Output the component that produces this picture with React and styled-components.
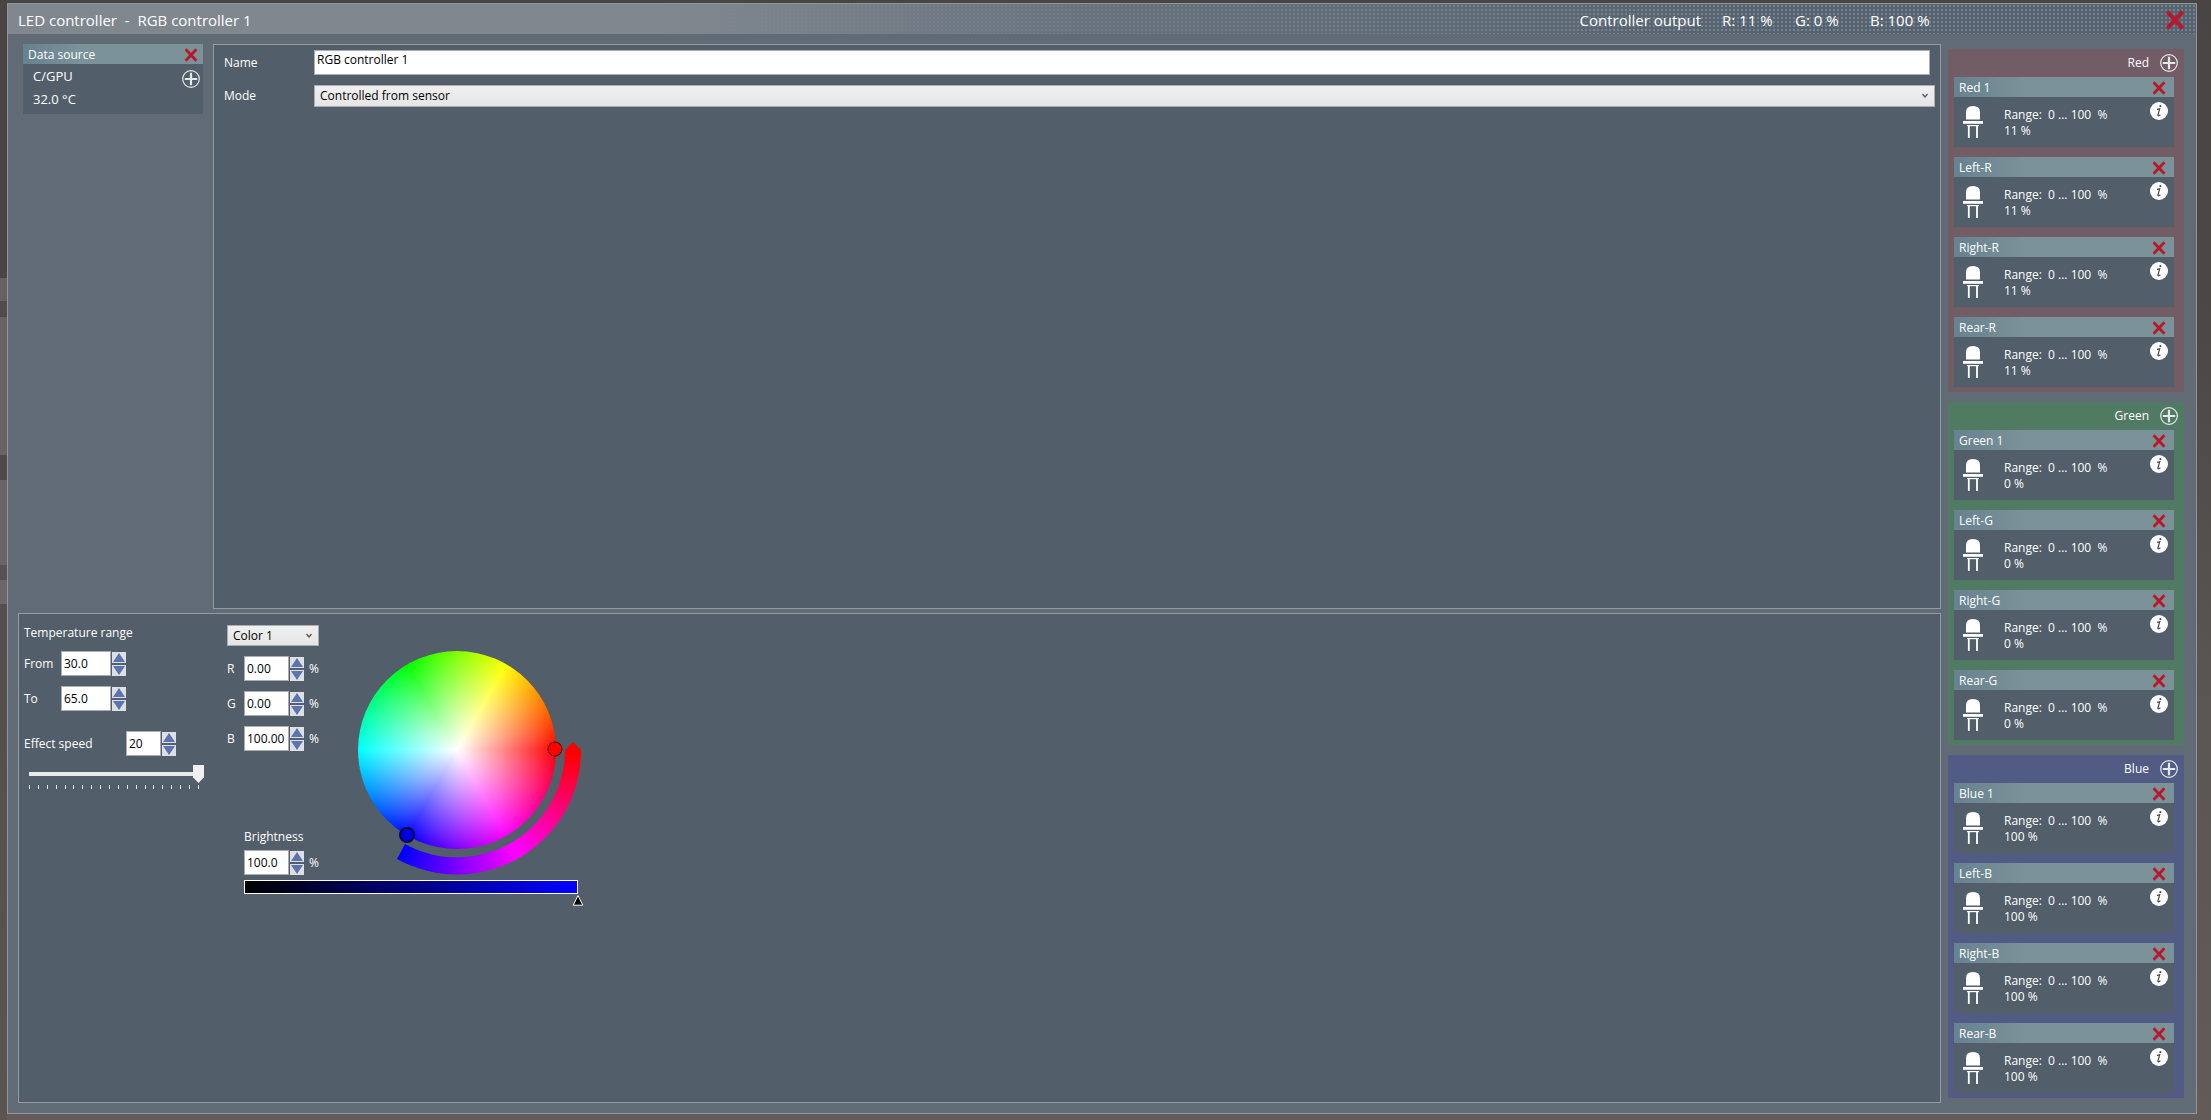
import React, { useState } from "react";
import styled, { createGlobalStyle, css } from "styled-components";

const GROUPS = [
  {
    name: "Red",
    color: "#725c66",
    value: "11 %",
    channels: ["Red 1", "Left-R", "Right-R", "Rear-R"],
  },
  {
    name: "Green",
    color: "#517a63",
    value: "0 %",
    channels: ["Green 1", "Left-G", "Right-G", "Rear-G"],
  },
  {
    name: "Blue",
    color: "#525b84",
    value: "100 %",
    channels: ["Blue 1", "Left-B", "Right-B", "Rear-B"],
  },
];

const CrossIcon = () => (
  <svg viewBox="0 0 14 14" width="100%" height="100%" aria-hidden="true">
    <path d="M1.6 1.2L12.4 12.8M12.4 1.2L1.6 12.8" stroke="#b8182c" strokeWidth="2.8" />
  </svg>
);

const PlusIcon = () => (
  <svg viewBox="0 0 18 18" width="18" height="18" aria-hidden="true">
    <circle cx="9" cy="9" r="8.3" fill="none" stroke="#e4e8ea" strokeWidth="1.2" />
    <path d="M9 2.8V15.2M2.8 9H15.2" stroke="#e4e8ea" strokeWidth="2.2" />
  </svg>
);

const InfoIcon = () => (
  <svg viewBox="0 0 18 18" width="18" height="18" aria-hidden="true">
    <circle cx="9" cy="9" r="9" fill="#fff" />
    <circle cx="10.4" cy="4" r="1.1" fill="#3f4850" />
    <path
      d="M7 7.4L9.7 6.8L7.9 13.2Q7.7 14.6 10.4 12.8"
      fill="none"
      stroke="#3f4850"
      strokeWidth="1.2"
    />
  </svg>
);

const LedIcon = () => (
  <svg viewBox="0 0 20 32" width="20" height="32" aria-hidden="true">
    <path d="M3 13.5V6Q3 0 10 0Q17 0 17 6V13.5Z" fill="#fff" />
    <path d="M0 15H20V17.8H0Z" fill="#fff" />
    <path d="M4 19H16V20.2H4Z" fill="#fff" />
    <path d="M5.8 19.5V32M14 19.5V32" stroke="#fff" strokeWidth="1.8" />
  </svg>
);

const Spinner = ({ id, value, width }) => {
  const [current, setCurrent] = useState(value);
  const digits = (value.split(".")[1] || "").length;

  const step = (amount) => {
    setCurrent((Number(current) + amount).toFixed(digits));
  };

  return (
    <SpinnerBox>
      <NumberInput
        id={id}
        $width={width}
        value={current}
        onChange={(e) => setCurrent(e.target.value)}
      />
      <SpinButtons>
        <SpinButton aria-label="Increase" onClick={() => step(1)}>
          <svg viewBox="0 0 12 9" width="12" height="9">
            <path d="M6 0L12 9H0Z" fill="#5b74b0" />
          </svg>
        </SpinButton>
        <SpinButton aria-label="Decrease" onClick={() => step(-1)}>
          <svg viewBox="0 0 12 9" width="12" height="9">
            <path d="M0 0H12L6 9Z" fill="#5b74b0" />
          </svg>
        </SpinButton>
      </SpinButtons>
    </SpinnerBox>
  );
};

const ChannelCard = ({ name, value }) => (
  <Card>
    <CardHeader>
      <span>{name}</span>
      <CloseButton aria-label={`Remove ${name}`}>
        <CrossIcon />
      </CloseButton>
    </CardHeader>
    <ChannelBody>
      <LedIcon />
      <ChannelText>
        <div>Range:&nbsp; 0 ... 100&nbsp; %</div>
        <div>{value}</div>
      </ChannelText>
      <IconButton aria-label={`${name} info`}>
        <InfoIcon />
      </IconButton>
    </ChannelBody>
  </Card>
);

const App = () => {
  const [name, setName] = useState("RGB controller 1");
  const [speed, setSpeed] = useState(20);

  return (
    <Page>
      <GlobalStyle />
      <Window>
        <TitleBar>
          <Title>LED controller &nbsp;-&nbsp; RGB controller 1</Title>
          <Output>
            <span>Controller output</span>
            <OutputValue $width={52}>R: 11 %</OutputValue>
            <OutputValue $width={54}>G: 0 %</OutputValue>
            <OutputValue $width={62}>B: 100 %</OutputValue>
          </Output>
          <CloseButton $large aria-label="Close">
            <CrossIcon />
          </CloseButton>
        </TitleBar>
        <Content>
          <MainArea>
            <TopArea>
              <SourceCard>
                <CardHeader $compact>
                  <span>Data source</span>
                  <CloseButton aria-label="Remove data source">
                    <CrossIcon />
                  </CloseButton>
                </CardHeader>
                <SourceBody>
                  <div>
                    <div>C/GPU</div>
                    <div>32.0 °C</div>
                  </div>
                  <IconButton aria-label="Add data source">
                    <PlusIcon />
                  </IconButton>
                </SourceBody>
              </SourceCard>
              <Panel>
                <FormGrid>
                  <label htmlFor="name">Name</label>
                  <NameInput
                    id="name"
                    value={name}
                    onChange={(e) => setName(e.target.value)}
                  />
                  <label htmlFor="mode">Mode</label>
                  <Select id="mode">
                    <option>Controlled from sensor</option>
                  </Select>
                </FormGrid>
              </Panel>
            </TopArea>
            <EffectPanel>
              <RangeColumn>
                <div>Temperature range</div>
                <FieldRow $label={37}>
                  <label htmlFor="from">From</label>
                  <Spinner id="from" value="30.0" width={50} />
                </FieldRow>
                <FieldRow $label={37}>
                  <label htmlFor="to">To</label>
                  <Spinner id="to" value="65.0" width={50} />
                </FieldRow>
                <SpeedRow $label={102}>
                  <label htmlFor="speed">Effect speed</label>
                  <Spinner id="speed" value="20" width={35} />
                </SpeedRow>
                <SliderBox>
                  <Slider
                    type="range"
                    min="1"
                    max="20"
                    aria-label="Effect speed"
                    value={speed}
                    onChange={(e) => setSpeed(e.target.value)}
                  />
                  <Ticks>
                    {Array.from({ length: 20 }, (_, i) => (
                      <i key={i} />
                    ))}
                  </Ticks>
                </SliderBox>
              </RangeColumn>
              <ColorColumn>
                <div>
                  <ColorSelect aria-label="Color">
                    <option>Color 1</option>
                  </ColorSelect>
                  {[
                    ["R", "0.00"],
                    ["G", "0.00"],
                    ["B", "100.00"],
                  ].map(([label, value]) => (
                    <FieldRow key={label} $label={17}>
                      <label htmlFor={label}>{label}</label>
                      <Spinner id={label} value={value} width={45} />
                      <Unit>%</Unit>
                    </FieldRow>
                  ))}
                </div>
                <WheelBox>
                  <Wheel />
                  <HueArc />
                  <WheelMarkers viewBox="0 0 250 250">
                    <circle cx="223" cy="124" r="7" fill="#f00" stroke="#400" />
                    <circle
                      cx="75"
                      cy="210"
                      r="7"
                      fill="#0000e6"
                      stroke="#000a3c"
                      strokeWidth="2"
                    />
                  </WheelMarkers>
                </WheelBox>
                <Brightness>
                  <label htmlFor="brightness">Brightness</label>
                  <BrightnessRow>
                    <Spinner id="brightness" value="100.0" width={45} />
                    <Unit>%</Unit>
                  </BrightnessRow>
                  <BrightnessBar />
                  <BarPointer viewBox="0 0 12 12">
                    <path d="M6 1.5L10.8 11.2H1.2Z" fill="#000" stroke="#fff" />
                  </BarPointer>
                </Brightness>
              </ColorColumn>
            </EffectPanel>
          </MainArea>
          <Outputs>
            {GROUPS.map((group) => (
              <Group key={group.name} $color={group.color}>
                <GroupHeader>
                  <span>{group.name}</span>
                  <IconButton aria-label={`Add ${group.name}`}>
                    <PlusIcon />
                  </IconButton>
                </GroupHeader>
                <CardList>
                  {group.channels.map((channel) => (
                    <ChannelCard key={channel} name={channel} value={group.value} />
                  ))}
                </CardList>
              </Group>
            ))}
          </Outputs>
        </Content>
      </Window>
    </Page>
  );
};

export default App;

const GlobalStyle = createGlobalStyle`
  * {
    box-sizing: border-box;
  }
  body {
    margin: 0;
    color: #fff;
    font-family: "Open Sans", "Noto Sans", sans-serif;
    font-size: 12px;
    line-height: 16px;
  }
  button,
  input,
  select {
    margin: 0;
    font: inherit;
  }
`;

const Page = styled.div`
  display: flex;
  min-height: 100vh;
  padding: 3px 14px 6px 7px;
  background-color: #4c4744;
  background-image: linear-gradient(
      #4a4543 278px,
      #67615f 278px 301px,
      #514b4a 301px 317px,
      #686260 317px 455px,
      #504a48 455px 480px,
      #6a6466 480px 565px,
      #575154 565px 580px,
      #6c6668 580px 604px,
      #544e4c 604px 640px,
      #5d5450
    ),
    linear-gradient(#494542, #4c4845 30%, #5b5551 60%, #625b58);
  background-size: 7px 100%, 100% 100%;
  background-repeat: no-repeat;
`;

const Window = styled.main`
  flex: 1;
  display: flex;
  flex-direction: column;
  border: 1px solid #8f979d;
  background-color: #606b75;
`;

const TitleBar = styled.header`
  display: flex;
  align-items: center;
  height: 30px;
  padding: 1px 11px 0 10px;
  font-size: 15px;
  background-image: linear-gradient(
      90deg,
      #80878f 0%,
      #80878f 30%,
      rgba(110, 120, 130, 0.7) 50%,
      transparent 80%
    ),
    radial-gradient(circle, #77828c 1px, transparent 1px);
  background-size: 100% 100%, 4px 4px;
  background-color: #566370;
`;

const Title = styled.h1`
  flex: 1;
  margin: 0;
  font-size: 15px;
  font-weight: 400;
`;

const Output = styled.div`
  display: flex;
  gap: 21px;
  margin-right: 233px;
`;

const OutputValue = styled.span`
  min-width: ${(props) => props.$width}px;
`;

const Content = styled.div`
  flex: 1;
  display: flex;
  gap: 7px;
  padding: 10px 12px 10px 10px;
`;

const MainArea = styled.div`
  flex: 1;
  display: flex;
  flex-direction: column;
  gap: 4px;
`;

const TopArea = styled.div`
  flex: 1;
  display: flex;
  align-items: flex-start;
  gap: 10px;
  padding-left: 5px;
`;

const Panel = styled.section`
  flex: 1;
  align-self: stretch;
  border: 1px solid #939ca3;
  background-color: #525e69;
  padding: 5px 5px 5px 10px;
`;

const EffectPanel = styled(Panel)`
  flex: 0 0 auto;
  min-height: 490px;
  display: flex;
  gap: 23px;
  padding: 11px 5px;
`;

const FormGrid = styled.div`
  display: grid;
  grid-template-columns: 90px 1fr;
  align-items: center;
  row-gap: 10px;
`;

const field = css`
  border: 1px solid #abadb3;
  border-radius: 0;
  background-color: #fff;
  color: #000;
`;

const NameInput = styled.input`
  ${field}
  height: 25px;
  margin-right: 5px;
  padding: 0 2px 6px;
`;

const Select = styled.select`
  ${field}
  appearance: none;
  width: 100%;
  height: 22px;
  padding: 0 5px;
  background: url("data:image/svg+xml,%3Csvg xmlns='http://www.w3.org/2000/svg' viewBox='0 0 8 6'%3E%3Cpath d='M1.5 1L4 4L6.5 1' fill='none' stroke='%23555' stroke-width='1.3'/%3E%3C/svg%3E")
      right 5px center / 8px 6px no-repeat,
    linear-gradient(#f0f0f0, #e5e5e5);
`;

const ColorSelect = styled(Select)`
  display: block;
  width: 92px;
  height: 21px;
`;

const Card = styled.article`
  background-color: #525e69;
`;

const SourceCard = styled(Card)`
  width: 180px;
`;

const CardHeader = styled.div`
  display: flex;
  align-items: center;
  justify-content: space-between;
  height: 20px;
  padding: 1px ${(props) => (props.$compact ? 5 : 8)}px 0 5px;
  background-image: linear-gradient(90deg, #678290, #7a9298 32%);
`;

const SourceBody = styled.div`
  display: flex;
  align-items: flex-start;
  justify-content: space-between;
  height: 50px;
  padding: 1px 3px 0 10px;
  font-size: 13px;
  line-height: 23px;
  & > button {
    margin-top: 5px;
  }
`;

const CloseButton = styled.button`
  flex: none;
  display: flex;
  width: ${(props) => (props.$large ? 20 : 14)}px;
  height: ${(props) => (props.$large ? 20 : 14)}px;
  padding: 0;
  border: none;
  background: none;
  cursor: pointer;
`;

const IconButton = styled.button`
  flex: none;
  display: flex;
  padding: 0;
  border: none;
  border-radius: 50%;
  background: none;
  cursor: pointer;
`;

const RangeColumn = styled.div`
  width: 180px;
`;

const FieldRow = styled.div`
  display: grid;
  grid-template-columns: ${(props) => props.$label}px auto 1fr;
  align-items: center;
  margin-top: 10px;
`;

const SpeedRow = styled(FieldRow)`
  margin-top: 20px;
`;

const BrightnessRow = styled.div`
  display: flex;
  align-items: center;
  margin: 5px 0;
`;

const SpinnerBox = styled.div`
  display: flex;
  align-items: center;
  gap: 1px;
`;

const NumberInput = styled.input`
  ${field}
  width: ${(props) => props.$width}px;
  height: 25px;
  padding: 0 2px;
`;

const SpinButtons = styled.div`
  display: flex;
  flex-direction: column;
  gap: 2px;
`;

const SpinButton = styled.button`
  display: flex;
  align-items: center;
  justify-content: center;
  width: 14px;
  height: 11px;
  padding: 0;
  border: none;
  background-color: #dcdfe3;
`;

const Unit = styled.span`
  padding-left: 5px;
`;

const SliderBox = styled.div`
  padding: 9px 0 0 5px;
`;

const Slider = styled.input`
  appearance: none;
  display: block;
  width: 175px;
  height: 18px;
  background: linear-gradient(#e7eaea, #e7eaea) left center / 100% 4px no-repeat;
  &::-webkit-slider-thumb {
    appearance: none;
    width: 11px;
    height: 18px;
    background-color: #f0f0f0;
    clip-path: polygon(0 0, 100% 0, 100% 68%, 50% 100%, 0 68%);
  }
`;

const Ticks = styled.div`
  display: flex;
  justify-content: space-between;
  width: 170px;
  margin-top: 2px;
  & > i {
    width: 1px;
    height: 4px;
    background-color: #e7eaea;
  }
`;

/* the brightness block starts under the fields, beside the foot of the wheel */
const ColorColumn = styled.div`
  display: grid;
  grid-template-columns: 92px 250px;
  grid-template-rows: 204px auto;
  column-gap: 13px;
  align-content: start;
`;

const WheelBox = styled.div`
  position: relative;
  width: 250px;
  height: 250px;
`;

const Wheel = styled.div`
  position: absolute;
  inset: 26px;
  border-radius: 50%;
  background: radial-gradient(closest-side, #fff, rgba(255, 255, 255, 0)),
    conic-gradient(from 90deg, #f00, #f0f, #00f, #0ff, #0f0, #ff0, #f00);
`;

const HueArc = styled.div`
  position: absolute;
  inset: 0;
  background: conic-gradient(
    from 80deg,
    #f00 0 12deg,
    #f0f 70deg,
    #00f 128deg 300deg,
    #f00 300deg
  );
  clip-path: path(
    "M233 125L241 117L249 125A124 124 0 0 1 65 234L73 219A108 108 0 0 0 233 125Z"
  );
`;

const WheelMarkers = styled.svg`
  position: absolute;
  inset: 0;
`;

const Brightness = styled.div`
  grid-column: 1 / -1;
  width: 334px;
  margin-left: 17px;
  & > label {
    display: block;
    width: 80px;
  }
`;

const BrightnessBar = styled.div`
  height: 14px;
  border: 1px solid #fff;
  background-image: linear-gradient(90deg, #000, #00f);
`;

const BarPointer = styled.svg`
  display: block;
  width: 12px;
  height: 12px;
  margin: 0 -6px 0 auto;
`;

const Outputs = styled.aside`
  flex: none;
  display: flex;
  flex-direction: column;
  gap: 10px;
  width: 236px;
  padding-top: 5px;
`;

const Group = styled.section`
  padding: 0 10px 5px 6px;
  background-color: ${(props) => props.$color};
`;

const GroupHeader = styled.div`
  display: flex;
  align-items: center;
  justify-content: flex-end;
  gap: 11px;
  height: 28px;
  margin-right: -4px;
`;

const CardList = styled.div`
  display: flex;
  flex-direction: column;
  gap: 10px;
`;

const ChannelBody = styled.div`
  display: flex;
  align-items: flex-start;
  height: 50px;
  padding: 5px 6px 0 9px;
  & > svg {
    margin-top: 4px;
  }
`;

const ChannelText = styled.div`
  flex: 1;
  padding: 5px 0 0 21px;
`;
